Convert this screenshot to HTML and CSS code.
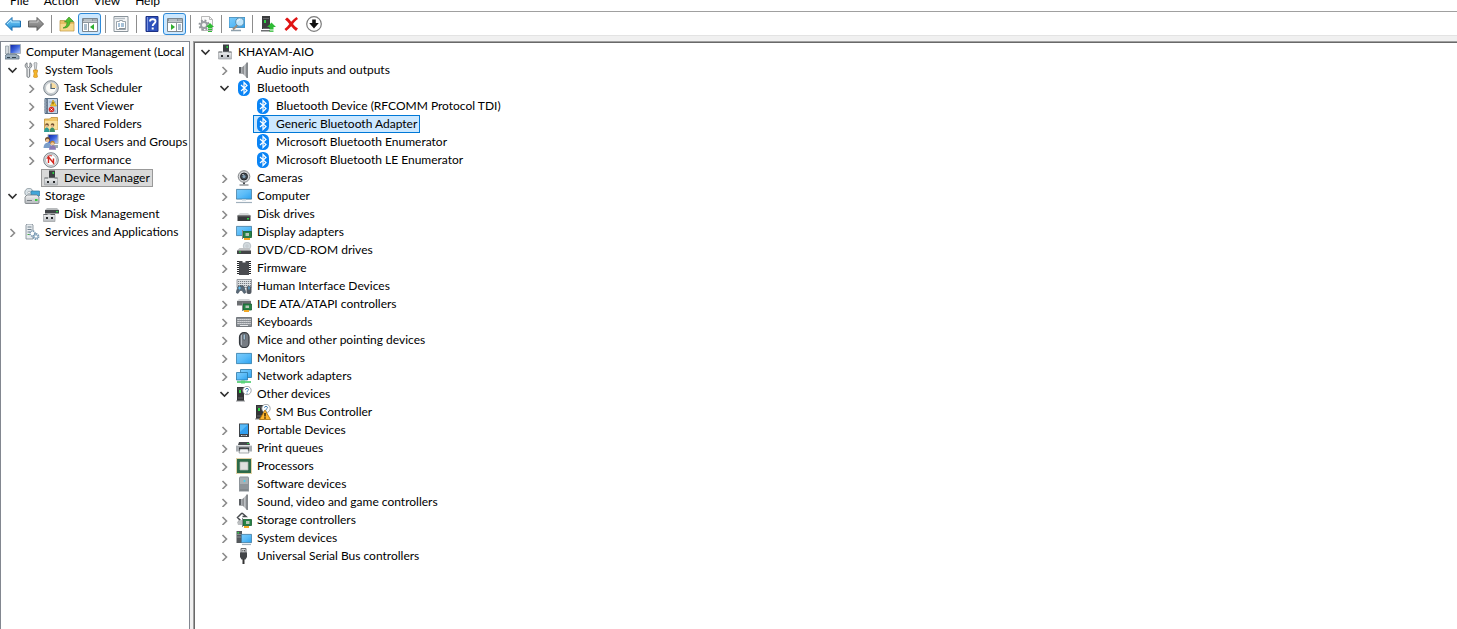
FILE: index.html
```
<!DOCTYPE html>
<html lang="en">
<head>
  <meta charset="UTF-8">
  <title>Computer Management</title>
  <meta name="viewport" content="width=device-width, initial-scale=1.0">
  <link rel="stylesheet" href="styles.css">
</head>
<body>

<!-- icon sprite -->
<svg class="sprite" aria-hidden="true">
  <defs>
    <linearGradient id="screen" x1="0" y1="0" x2="1" y2="1"><stop offset="0" stop-color="#7ccbfb"/><stop offset=".5" stop-color="#5bbcf8"/><stop offset="1" stop-color="#2ba1f0"/></linearGradient>
    <linearGradient id="metal" x1="0" y1="0" x2="1" y2="0"><stop offset="0" stop-color="#5c5f63"/><stop offset=".5" stop-color="#c9cccf"/><stop offset="1" stop-color="#74777b"/></linearGradient>
    <linearGradient id="box" x1="0" y1="0" x2="0" y2="1"><stop offset="0" stop-color="#f1f2f3"/><stop offset="1" stop-color="#b5b9bd"/></linearGradient>
    <linearGradient id="blue" x1="0" y1="0" x2="0" y2="1"><stop offset="0" stop-color="#8ad6fa"/><stop offset="1" stop-color="#1688d4"/></linearGradient>
    <linearGradient id="gray" x1="0" y1="0" x2="0" y2="1"><stop offset="0" stop-color="#b0b0b0"/><stop offset="1" stop-color="#6e6e6e"/></linearGradient>
    <linearGradient id="navy" x1="0" y1="0" x2="1" y2="1"><stop offset="0" stop-color="#0a1f9c"/><stop offset=".5" stop-color="#3c63dd"/><stop offset="1" stop-color="#b9d0fa"/></linearGradient>
  </defs>

  <symbol id="i-open" viewBox="0 0 10 10"><path d="M.5 3l4 4 4-4" fill="none" stroke="#303030" stroke-width="1.600"/></symbol>
  <symbol id="i-closed" viewBox="0 0 10 10"><path d="M2.500 2l4 4-4 4" fill="none" stroke="#8c8c8c" stroke-width="1.600"/></symbol>

  <!-- toolbar -->
  <symbol id="i-back" viewBox="0 0 16 16"><path d="M.5 8L7 1.500V5h8.500v6H7v3.500z" fill="url(#blue)" stroke="#1c6fae"/><path d="M2 8l4-4v2h8.500" fill="none" stroke="#b5e7ff"/></symbol>
  <symbol id="i-forward" viewBox="0 0 16 16"><path d="M15.500 8L9 1.500V5H.5v6H9v3.500z" fill="url(#gray)" stroke="#5f5f5f"/><path d="M1.500 6H10V4" fill="none" stroke="#c9c9c9"/></symbol>
  <symbol id="i-up" viewBox="0 0 16 16"><path d="M1 4.500h5l1.500 1.500H15v9H1z" fill="#e6bf66" stroke="#b9913c" stroke-width=".7"/><path d="M1.500 8h13v6.500h-13z" fill="#f5d98e"/><path d="M4 12c3-1 4-3 4-6H5.500l4.500-5 4.500 4.500H11c0 4-2.500 7-7 6.500z" fill="#54bd30" stroke="#2f8a17" stroke-width=".6"/></symbol>
  <symbol id="i-pane-left" viewBox="0 0 16 16"><path d="M.5 2.500h15v13H.5z" fill="#fff" stroke="#7b858d"/><path d="M1 3h14v2.500H1z" fill="#89939b"/><path d="M2 4h8" stroke="#fff" stroke-width=".8"/><path d="M11.500 4h1m1 0h1" stroke="#fff"/><path d="M1 6.500h14M6.500 7v8" stroke="#8f989f"/><path d="M2 9h3M2 11h3M2 13h3" stroke="#557a9b"/><path d="M12 8v6l-4-3z" fill="#2fae2f"/></symbol>
  <symbol id="i-props" viewBox="0 0 16 16"><path d="M1 .5h14v15H1z" fill="#f5f6f7" stroke="#8b949b"/><path d="M2 2.500h10" stroke="#b6bec4" stroke-width="1.500"/><path d="M3.500 5.500h3v-1h3v1h3v8h-9z" fill="#fff" stroke="#9ba4ab"/><path d="M5 8h2m1 0h3M5 10h2m1 0h3" stroke="#4e83b0"/><path d="M6 12.500h6" stroke="#8a9197"/></symbol>
  <symbol id="i-help" viewBox="0 0 16 16"><path d="M2 .5h12v15H2z" fill="#2f52bd" stroke="#1c3184"/><path d="M3.500 1v14" stroke="#7892df"/><path d="M6 5.500C6 2.500 11.500 2.500 11.500 5.500c0 2-2.800 2-2.800 4.500" fill="none" stroke="#fff" stroke-width="1.800"/><path d="M7.700 11.500h2v2h-2z" fill="#fff"/></symbol>
  <symbol id="i-pane-right" viewBox="0 0 16 16"><path d="M.5 2.500h15v13H.5z" fill="#fff" stroke="#7b858d"/><path d="M1 3h14v2.500H1z" fill="#89939b"/><path d="M2 4h8" stroke="#fff" stroke-width=".8"/><path d="M11.500 4h1m1 0h1" stroke="#fff"/><path d="M1 6.500h14M9.500 7v8" stroke="#8f989f"/><path d="M11 9h3m-3 2h3m-3 2h3" stroke="#557a9b"/><path d="M4 8v6l4-3z" fill="#2fae2f"/></symbol>
  <symbol id="i-gear-up" viewBox="0 0 16 16"><path d="M3.500.5h8l3 3v11h-11z" fill="#fafafa" stroke="#b9b9b9"/><path d="M11.500.5v3h3" fill="none" stroke="#b9b9b9"/><circle cx="6" cy="9" r="4.500" fill="none" stroke="#8f9498" stroke-width="2" stroke-dasharray="1.800 1.730"/><circle cx="6" cy="9" r="3" fill="#f4f4f4" stroke="#999ea2" stroke-width="1.800"/><path d="M12 7l4 4h-2v1.500h-4V11H8z" fill="#2fbb35"/><path d="M10 13.500h4M10 15.500h4" stroke="#2fbb35"/></symbol>
  <symbol id="i-scan" viewBox="0 0 16 16"><path d="M0 1.500h16v10H0z" fill="url(#screen)" stroke="#3c86b5" stroke-width=".8"/><path d="M2 14.500h10" stroke="#8fa0ac" stroke-width="1.500"/><path d="M8.500 9L4 13.500" stroke="#9a8c7e" stroke-width="2"/><circle cx="10.800" cy="6" r="4.200" fill="#bfe5fb" stroke="#5c90b0"/><path d="M8.500 5.500c.5-1.500 1.500-2 2.500-2" fill="none" stroke="#fff"/></symbol>
  <symbol id="i-update" viewBox="0 0 16 16"><path d="M2 0h8v13H2z" fill="#3b3c3e"/><path d="M3 2.500h6M3 12.500h6" stroke="#68696c"/><path d="M4 4h2v3H4z" fill="#30cf44"/><path d="M1 14h9v1.500H1z" fill="#6d6f72"/><path d="M11.500 6.500l4.500 4.500h-2.500v2h-4v-2H7z" fill="#2fbb35"/><path d="M9.500 14h4M9.500 15.700h4" stroke="#2fbb35"/></symbol>
  <symbol id="i-remove" viewBox="0 0 16 16"><path d="M2 3.500L4 1.500c1.500 1 3 2.600 4.200 4.200C9.800 4 11.500 2.400 13.500 1l1.500 2c-2 1.300-3.600 3-5 4.900 1.300 1.600 3 3.300 5 4.600L13 15c-1.800-1.300-3.400-2.900-4.800-4.700C6.600 12 5 13.700 3.200 15L1.500 13c1.800-1.500 3.400-3.300 4.800-5.100C5 6.200 3.600 4.800 2 3.500z" fill="#e01414"/></symbol>
  <symbol id="i-disable" viewBox="0 0 16 16"><circle cx="8" cy="8" r="7.300" fill="#fff" stroke="#7b7b7b" stroke-width="1.200"/><path d="M6.200 3.500h3.600V7h3L8 12.500 3.200 7h3z" fill="#111"/></symbol>

  <!-- console tree -->
  <symbol id="i-console" viewBox="0 0 16 16"><path d="M5 .5h10.500v9H5z" fill="url(#navy)" stroke="#a9b2bb"/><path d="M8 10h4v2H8z" fill="#8d969e"/><path d="M.5 2h3v8h-3z" fill="#d5dade" stroke="#8b959d" stroke-width=".7"/><path d="M0 12l2-2h8l4 2v3H0z" fill="#9db0bf" stroke="#5c6d7b" stroke-width=".8"/><path d="M2 13.500h3m2 0h4" stroke="#31424f"/></symbol>
  <symbol id="i-tools" viewBox="0 0 16 16"><path d="M3 .8v3.700l1.500 1 1.500-1V.8c2.300 1 2.500 4-.3 5.700v7.700c0 1.600-2.700 1.600-2.700 0V6.500C.5 5 .7 2 3 .8z" fill="#e7e9ea" stroke="#70767b"/><path d="M10 1l1.500-.8L13 1l-.8 6.500h-1.400z" fill="#d7dadd" stroke="#8d9194" stroke-width=".7"/><path d="M9.500 8h4v2l-.7 1 .7 4c-1 1-3 1-4 0l.7-4-.7-1z" fill="#f4b62b" stroke="#c4821a" stroke-width=".6"/></symbol>
  <symbol id="i-clock" viewBox="0 0 16 16"><circle cx="8" cy="8" r="7.300" fill="#cdd2d6" stroke="#7c858c"/><circle cx="8" cy="8" r="5.500" fill="#fbfbf8" stroke="#b4bac0" stroke-width=".6"/><path d="M8 8V2.500A5.500 5.500 0 0 1 13.500 8z" fill="#f7dda2"/><path d="M8 3.500V8.500h4" fill="none" stroke="#4f6272" stroke-width="1.200"/></symbol>
  <symbol id="i-event" viewBox="0 0 16 16"><path d="M2 .5h12.500v15H2z" fill="#c6d6e7" stroke="#596f86"/><path d="M4 1v14" stroke="#4a5d73" stroke-width="1.500"/><path d="M1 3h3M1 6h3M1 9h3M1 12h3" stroke="#8c9baa"/><path d="M6 4h7M6 13h7" stroke="#8eabc9"/><path d="M10 2l3.500 6h-6z" fill="#ffd232" stroke="#b78a12" stroke-width=".6"/><path d="M10 4v2.500" stroke="#5a4300"/><circle cx="8.500" cy="11.500" r="2.800" fill="#dd2c22"/><path d="M7.500 10.500l2 2m0-2l-2 2" stroke="#fff" stroke-width=".8"/></symbol>
  <symbol id="i-shared" viewBox="0 0 16 16"><path d="M1.500 3h5L8 1.500h6.500v12h-13z" fill="#f0c666" stroke="#bd9038" stroke-width=".8"/><path d="M2 5h12.500v8.500H2z" fill="#fae09a"/><circle cx="4" cy="9" r="1.800" fill="#6b4a2c"/><circle cx="9.500" cy="9" r="1.800" fill="#6b4a2c"/><circle cx="3.700" cy="10" r="1.300" fill="#e8b98c"/><circle cx="9.200" cy="10" r="1.300" fill="#e8b98c"/><path d="M1 16c0-6 5.500-6 5.500 0z" fill="#2d9b95"/><path d="M6.500 16c0-6 5.500-6 5.500 0z" fill="#3c8f68"/></symbol>
  <symbol id="i-users" viewBox="0 0 16 16"><path d="M5 .5h10v9H5z" fill="url(#navy)" stroke="#a9b2bb"/><path d="M9 11h6v3H9z" fill="#9aa6b0"/><circle cx="4.500" cy="5.500" r="2.500" fill="#74502d"/><circle cx="4.500" cy="6.500" r="1.800" fill="#edbd8e"/><path d="M.5 14c0-7 8-7 8 0z" fill="#7b9ec9"/><circle cx="9.500" cy="9" r="2.300" fill="#b98134"/><circle cx="9.500" cy="9.800" r="1.600" fill="#f2c99a"/><path d="M6 15.800c0-6 7-6 7 0z" fill="#8a79b5"/></symbol>
  <symbol id="i-perf" viewBox="0 0 16 16"><circle cx="8" cy="8" r="7.300" fill="#e1e4e6" stroke="#777f86"/><circle cx="8" cy="8" r="5.500" fill="#fff" stroke="#9ba2a8" stroke-width=".7"/><path d="M5.500 11V5l5 6V6.500" fill="none" stroke="#d3261e" stroke-width="1.400"/><path d="M4 7c.5-3 3-4 5-3" fill="none" stroke="#d3261e"/></symbol>
  <symbol id="i-device" viewBox="0 0 16 16"><path d="M6 .5h6v9H6z" fill="#3c3f42"/><path d="M9.500 2H11v2H9.500z" fill="#2bd142"/><path d="M1.500 8h13v7h-13z" fill="url(#box)" stroke="#a2a5a8" stroke-width=".7"/><path d="M1.500 8h3.500M11.500 8h3" stroke="#6d7073"/><path d="M4 11h2v2H4zm6 0h2v2h-2z" fill="#26282a"/></symbol>
  <symbol id="i-storage" viewBox="0 0 16 16"><circle cx="5" cy="4.500" r="4.200" fill="#d9e2e7" stroke="#87939b" stroke-width=".8"/><circle cx="5" cy="4.500" r="1.200" fill="#fff" stroke="#8b989f" stroke-width=".6"/><path d="M7 3h8.500v5H7z" fill="#42a6d9" stroke="#32799f" stroke-width=".7"/><path d="M1 9l2-2h10l2 2v5.500q0 1-1 1H2q-1 0-1-1z" fill="url(#box)" stroke="#72797e" stroke-width=".8"/><path d="M3 12.500h5" stroke="#777e83"/><path d="M11 11h2.500v2H11z" fill="#3cc940"/></symbol>
  <symbol id="i-disk" viewBox="0 0 16 16"><path d="M2 4l2-2h10l2 2v1H2z" fill="#b8bbbd"/><path d="M2 4h14v3.500H2z" fill="#424548"/><path d="M13 5h2v1.200h-2z" fill="#30d247"/><path d="M.5 8.500h11.500v7H.5z" fill="url(#box)" stroke="#9da1a4" stroke-width=".7"/><path d="M.5 8.500h4m3 0h4.500" stroke="#606366"/><path d="M3 11h2v2H3zm5 0h2v2H8z" fill="#26282a"/></symbol>
  <symbol id="i-services" viewBox="0 0 16 16"><path d="M2 1l1-1h5l1 1v14H2z" fill="#e8ecef" stroke="#87929b" stroke-width=".9"/><path d="M3.500 3h4m-4 2.500h4m-4 2.500h4" stroke="#71818e"/><path d="M3.500 10.500h3" stroke="#4fae48"/><circle cx="8.500" cy="9.500" r="2.500" fill="#fff" stroke="#7d9bb4" stroke-width="1.600" stroke-dasharray="1.300 .7"/><circle cx="12" cy="12.500" r="2.600" fill="#fff" stroke="#6f91ac" stroke-width="1.700" stroke-dasharray="1.300 .7"/><circle cx="12" cy="12.500" r="1.700" fill="none" stroke="#8ba9c1"/></symbol>

  <!-- device classes -->
  <symbol id="i-speaker" viewBox="0 0 16 16"><path d="M3 5h3v6.500H3z" fill="#5b5f63"/><path d="M5 5h1.500v6.500H5z" fill="#a9adb1"/><path d="M6.500 5L11 .5v15.500L6.500 11.500z" fill="url(#metal)"/><path d="M10.500 .5h1.500v15.500h-1.500z" fill="#84888c"/></symbol>
  <symbol id="i-bt" viewBox="0 0 16 16"><rect x="2" y="0" width="12" height="16" rx="5.500" fill="#0a84f5"/><path d="M5 5l6 5.500L8 13.500v-11l3 3L5 11" fill="none" stroke="#fff" stroke-width="1.200"/></symbol>
  <symbol id="i-camera" viewBox="0 0 16 16"><path d="M7 12h2v2.500H7z" fill="#4b4e51"/><path d="M3.500 15h9" stroke="#9c9fa2" stroke-width="1.600"/><circle cx="8" cy="6.500" r="5.800" fill="#d4d6d8" stroke="#84878a"/><circle cx="8" cy="6.500" r="3.500" fill="#424a52" stroke="#22262a"/><circle cx="8" cy="6.500" r="1.500" fill="#82a2b8"/><path d="M6.500 5l1-1" stroke="#fff"/></symbol>
  <symbol id="i-monitor" viewBox="0 0 16 16"><path d="M.4 1.400h15.200v9.700H.4z" fill="url(#screen)" stroke="#41799d" stroke-width=".8"/><path d="M6 11.500h4v1.500H6z" fill="#dce5eb"/><path d="M0 14.500h16" stroke="#a0b0bc" stroke-width="1.200"/></symbol>
  <symbol id="i-screen" viewBox="0 0 16 16"><path d="M.4 3.400h15.200v10.200H.4z" fill="url(#screen)" stroke="#2c79a7" stroke-width=".8"/></symbol>
  <symbol id="i-display" viewBox="0 0 16 16"><path d="M.4 2.400h15.200v9.200H.4z" fill="url(#screen)" stroke="#41799d" stroke-width=".8"/><path d="M7 7.500h8.500v6H7z" fill="#278345" stroke="#176030" stroke-width=".8"/><path d="M9.500 9H13v3H9.500z" fill="#b4c6b7"/><path d="M6.500 6v9" stroke="#858a8d"/><path d="M8 14h6v2H8z" fill="#f2a928"/></symbol>
  <symbol id="i-drive" viewBox="0 0 16 16"><path d="M1.500 9.500L4 7h8l2.500 2.500z" fill="#d7d9da"/><path d="M1.500 9.500h13V15h-13z" fill="#38393b"/><path d="M1.500 10h13" stroke="#6a6c6e"/><path d="M11 12h2v1.500h-2z" fill="#2fd844"/></symbol>
  <symbol id="i-dvd" viewBox="0 0 16 16"><circle cx="11" cy="4" r="3.800" fill="#d3dade" stroke="#a4afb6" stroke-width=".6"/><circle cx="11" cy="4" r="1" fill="#fff" stroke="#9da8af" stroke-width=".6"/><path d="M1 8.500L3.500 6H13l2 2.500z" fill="#c0c2c4"/><path d="M1 8.500h14V12H1z" fill="#434547"/><path d="M3 10h2" stroke="#35d846"/></symbol>
  <symbol id="i-chip" viewBox="0 0 16 16"><path d="M3 1h10v14H3z" fill="#4a4c50"/><path d="M6.500 1h3v1.500h-3z" fill="#fff"/><path d="M2 1v14M14 1v14" stroke="#222427" stroke-width="2" stroke-dasharray="1 1"/></symbol>
  <symbol id="i-hid" viewBox="0 0 16 16"><path d="M1 1.500h14.500v8H1z" fill="#dfe2e4" stroke="#858a8f" stroke-width=".8"/><path d="M2 3.500h13M2 5.500h13M2 7.500h13" stroke="#777c82" stroke-dasharray="1.200 .8"/><path d="M2 8.500q3-2 6 0l2 6-2 1-2-3H4l-2 3-2-1z" fill="#586a79" stroke="#3a4650" stroke-width=".5"/><path d="M2 10h3M3.500 8.500v3" stroke="#63c0ef"/><rect x="10.500" y="8" width="5" height="8" rx="2" fill="#525961"/><path d="M13 8.500v3" stroke="#5abef5"/></symbol>
  <symbol id="i-ide" viewBox="0 0 16 16"><path d="M1 5l2-2h10l2 2z" fill="#d2d4d6"/><path d="M1 5h14v4.500H1z" fill="#6c6f72"/><path d="M7 8h8.500v6H7z" fill="#278345" stroke="#176030" stroke-width=".8"/><path d="M9.500 9.500H13v2.500H9.500z" fill="#b4c6b7"/><path d="M6.500 6.500V15" stroke="#858a8d"/><path d="M8 14h5v2H8z" fill="#f2a928"/></symbol>
  <symbol id="i-keyboard" viewBox="0 0 16 16"><path d="M.5 3.500h15v9H.5z" fill="#8b9096" stroke="#74797e"/><path d="M1.500 5.500h13M1.500 7.500h13M1.500 9.500h13" stroke="#f4f5f6" stroke-dasharray="1.200 .8"/><path d="M4 11.500h8" stroke="#e4e7ea"/></symbol>
  <symbol id="i-mouse" viewBox="0 0 16 16"><rect x="3.500" y=".6" width="9.500" height="15" rx="4.500" fill="#767c83" stroke="#33383d" stroke-width="1.200"/><path d="M5.500 3v10" stroke="#b2b8bf"/><rect x="7.200" y="2" width="2" height="6" rx="1" fill="#b8dcf5" stroke="#343a40" stroke-width=".6"/></symbol>
  <symbol id="i-network" viewBox="0 0 16 16"><path d="M4.500 1.500h11v8h-11z" fill="url(#screen)" stroke="#2c79a7" stroke-width=".8"/><path d="M.5 4.500h11V12H.5z" fill="url(#screen)" stroke="#2c79a7" stroke-width=".8"/><path d="M1 14h14" stroke="#38c65e" stroke-width="1.500"/><path d="M5 12.500h4v3H5z" fill="#59d47b"/></symbol>
  <symbol id="i-other" viewBox="0 0 16 16"><path d="M1 1h7v14H1z" fill="#343537"/><path d="M2 3h5M2 12h5" stroke="#606264"/><path d="M3 4h2v3H3z" fill="#2fd844"/><path d="M0 15h9" stroke="#898c8f"/><circle cx="11" cy="4.500" r="4.200" fill="#fff" stroke="#8d9295" stroke-width=".8"/><path d="M9.500 3.700c0-1.800 3-1.800 3 0 0 1-1.500 1-1.500 2.300M11 6.700v1" fill="none" stroke="#3d7bb3"/></symbol>
  <symbol id="i-warn" viewBox="0 0 16 16"><use href="#i-other"/><path d="M10 6l5.500 9.500h-11z" fill="#ffb52c" stroke="#a76d09" stroke-width=".8"/><path d="M10 9v3.500m0 .8v1.400" stroke="#1a1200" stroke-width="1.300"/></symbol>
  <symbol id="i-portable" viewBox="0 0 16 16"><path d="M3 1.500h10v13.500H3z" fill="#3e4349"/><path d="M4 2.500h8v9.500H4z" fill="#319ff0"/><path d="M4 2.500h8L4 10z" fill="#58baf8"/><path d="M5 13.500h1.500m1 0h1m1 0H11" stroke="#d8dde1"/></symbol>
  <symbol id="i-printer" viewBox="0 0 16 16"><path d="M3 2h10l1 3H2z" fill="#474a4e"/><path d="M0 5h16v6.500H0z" fill="#a9aeb2"/><path d="M0 5.500h16" stroke="#dfe2e4"/><path d="M3 7.500h10V11H3z" fill="#303337"/><path d="M4 9h8l1 4H3z" fill="#f3f5f6" stroke="#6f757a" stroke-width=".6"/><path d="M11 3.500h2" stroke="#2cc345"/></symbol>
  <symbol id="i-cpu" viewBox="0 0 16 16"><path d="M.5.5h15v15H.5z" fill="none" stroke="#c4a64c" stroke-dasharray="1 1"/><path d="M1 1h14v14H1z" fill="#2c6a48"/><path d="M4 4h8v8H4z" fill="#dfe1df" stroke="#adb4af" stroke-width=".7"/></symbol>
  <symbol id="i-software" viewBox="0 0 16 16"><path d="M3 1.500l1-1h8l1 1v14H3z" fill="#8d9499"/><path d="M4 1.500h8V8H4z" fill="#a9afb3"/><path d="M4 14h8" stroke="#747a7f"/><circle cx="8.500" cy="5" r="1" fill="#3fd3f5"/></symbol>
  <symbol id="i-storctl" viewBox="0 0 16 16"><path d="M6 1L1.500 5.500 6 10M6 1l4 3.500H6.500M2 9.500h4" fill="none" stroke="#494c50" stroke-width="1.500"/><path d="M1 10l3-2h4v5H2z" fill="#bbbec0"/><path d="M7 7.500h8.500v6H7z" fill="#278345" stroke="#176030" stroke-width=".8"/><path d="M10 9h3.500v3H10z" fill="#b4c6b7"/><path d="M6.500 6v9" stroke="#858a8d"/><path d="M8 14h5v2H8z" fill="#f2a928"/></symbol>
  <symbol id="i-system" viewBox="0 0 16 16"><path d="M.5 1h5.500v12H.5z" fill="#54585c"/><path d="M1 4.500h4.500M1 7h4.500" stroke="#878c90"/><path d="M1.500 2h1.500v1.500H1.500z" fill="#34db48"/><path d="M5.400 4.400h10.200v8.200H5.400z" fill="url(#screen)" stroke="#41799d" stroke-width=".8"/><path d="M6 14.500h9" stroke="#a0b0bc" stroke-width="1.200"/></symbol>
  <symbol id="i-usb" viewBox="0 0 16 16"><path d="M5 .5h5V5H5z" fill="#d8dadc" stroke="#686b6e"/><path d="M6.500 2h.8v1.500h-.8zM8 2h.8v1.500H8z" fill="#333"/><path d="M4 4.500h7V9l-1.500 2.500h-4L4 9z" fill="#434548"/><path d="M7.500 11v5" stroke="#333" stroke-width="2"/></symbol>
</svg>

<nav class="menubar">
  <button class="menu">File</button>
  <button class="menu">Action</button>
  <button class="menu">View</button>
  <button class="menu">Help</button>
</nav>

<div class="toolbar" role="toolbar">
  <button class="tool" aria-label="Back"><svg class="icon"><use href="#i-back"/></svg></button>
  <button class="tool" aria-label="Forward"><svg class="icon"><use href="#i-forward"/></svg></button>
  <span class="sep"></span>
  <button class="tool" aria-label="Up one level"><svg class="icon"><use href="#i-up"/></svg></button>
  <button class="tool active" aria-label="Show console tree"><svg class="icon"><use href="#i-pane-left"/></svg></button>
  <span class="sep"></span>
  <button class="tool" aria-label="Properties"><svg class="icon"><use href="#i-props"/></svg></button>
  <span class="sep"></span>
  <button class="tool" aria-label="Help"><svg class="icon"><use href="#i-help"/></svg></button>
  <button class="tool active" aria-label="Show action pane"><svg class="icon"><use href="#i-pane-right"/></svg></button>
  <span class="sep"></span>
  <button class="tool" aria-label="Update driver"><svg class="icon"><use href="#i-gear-up"/></svg></button>
  <span class="sep"></span>
  <button class="tool" aria-label="Scan for hardware changes"><svg class="icon"><use href="#i-scan"/></svg></button>
  <span class="sep"></span>
  <button class="tool" aria-label="Enable device"><svg class="icon"><use href="#i-update"/></svg></button>
  <button class="tool" aria-label="Uninstall device"><svg class="icon"><use href="#i-remove"/></svg></button>
  <button class="tool" aria-label="Disable device"><svg class="icon"><use href="#i-disable"/></svg></button>
</div>

<main class="panes">
  <section class="pane console">
    <ul class="tree">
      <li class="row"><span class="item"><svg class="icon"><use href="#i-console"/></svg>Computer Management (Local</span></li>
      <li>
        <div class="row"><button class="expander" aria-label="Collapse"><svg><use href="#i-open"/></svg></button><span class="item"><svg class="icon"><use href="#i-tools"/></svg>System Tools</span></div>
        <ul>
          <li class="row"><button class="expander" aria-label="Expand"><svg><use href="#i-closed"/></svg></button><span class="item"><svg class="icon"><use href="#i-clock"/></svg>Task Scheduler</span></li>
          <li class="row"><button class="expander" aria-label="Expand"><svg><use href="#i-closed"/></svg></button><span class="item"><svg class="icon"><use href="#i-event"/></svg>Event Viewer</span></li>
          <li class="row"><button class="expander" aria-label="Expand"><svg><use href="#i-closed"/></svg></button><span class="item"><svg class="icon"><use href="#i-shared"/></svg>Shared Folders</span></li>
          <li class="row"><button class="expander" aria-label="Expand"><svg><use href="#i-closed"/></svg></button><span class="item"><svg class="icon"><use href="#i-users"/></svg>Local Users and Groups</span></li>
          <li class="row"><button class="expander" aria-label="Expand"><svg><use href="#i-closed"/></svg></button><span class="item"><svg class="icon"><use href="#i-perf"/></svg>Performance</span></li>
          <li class="row leaf"><span class="item current"><svg class="icon"><use href="#i-device"/></svg>Device Manager</span></li>
        </ul>
      </li>
      <li>
        <div class="row"><button class="expander" aria-label="Collapse"><svg><use href="#i-open"/></svg></button><span class="item"><svg class="icon"><use href="#i-storage"/></svg>Storage</span></div>
        <ul>
          <li class="row leaf"><span class="item"><svg class="icon"><use href="#i-disk"/></svg>Disk Management</span></li>
        </ul>
      </li>
      <li class="row"><button class="expander" aria-label="Expand"><svg><use href="#i-closed"/></svg></button><span class="item"><svg class="icon"><use href="#i-services"/></svg>Services and Applications</span></li>
    </ul>
  </section>

  <section class="pane devices">
    <ul class="tree">
      <li>
        <div class="row"><button class="expander" aria-label="Collapse"><svg><use href="#i-open"/></svg></button><span class="item"><svg class="icon"><use href="#i-device"/></svg>KHAYAM-AIO</span></div>
        <ul>
          <li class="row"><button class="expander" aria-label="Expand"><svg><use href="#i-closed"/></svg></button><span class="item"><svg class="icon"><use href="#i-speaker"/></svg>Audio inputs and outputs</span></li>
          <li>
            <div class="row"><button class="expander" aria-label="Collapse"><svg><use href="#i-open"/></svg></button><span class="item"><svg class="icon"><use href="#i-bt"/></svg>Bluetooth</span></div>
            <ul>
              <li class="row leaf"><span class="item"><svg class="icon"><use href="#i-bt"/></svg>Bluetooth Device (RFCOMM Protocol TDI)</span></li>
              <li class="row leaf"><span class="item selected"><svg class="icon"><use href="#i-bt"/></svg>Generic Bluetooth Adapter</span></li>
              <li class="row leaf"><span class="item"><svg class="icon"><use href="#i-bt"/></svg>Microsoft Bluetooth Enumerator</span></li>
              <li class="row leaf"><span class="item"><svg class="icon"><use href="#i-bt"/></svg>Microsoft Bluetooth LE Enumerator</span></li>
            </ul>
          </li>
          <li class="row"><button class="expander" aria-label="Expand"><svg><use href="#i-closed"/></svg></button><span class="item"><svg class="icon"><use href="#i-camera"/></svg>Cameras</span></li>
          <li class="row"><button class="expander" aria-label="Expand"><svg><use href="#i-closed"/></svg></button><span class="item"><svg class="icon"><use href="#i-monitor"/></svg>Computer</span></li>
          <li class="row"><button class="expander" aria-label="Expand"><svg><use href="#i-closed"/></svg></button><span class="item"><svg class="icon"><use href="#i-drive"/></svg>Disk drives</span></li>
          <li class="row"><button class="expander" aria-label="Expand"><svg><use href="#i-closed"/></svg></button><span class="item"><svg class="icon"><use href="#i-display"/></svg>Display adapters</span></li>
          <li class="row"><button class="expander" aria-label="Expand"><svg><use href="#i-closed"/></svg></button><span class="item"><svg class="icon"><use href="#i-dvd"/></svg>DVD/CD-ROM drives</span></li>
          <li class="row"><button class="expander" aria-label="Expand"><svg><use href="#i-closed"/></svg></button><span class="item"><svg class="icon"><use href="#i-chip"/></svg>Firmware</span></li>
          <li class="row"><button class="expander" aria-label="Expand"><svg><use href="#i-closed"/></svg></button><span class="item"><svg class="icon"><use href="#i-hid"/></svg>Human Interface Devices</span></li>
          <li class="row"><button class="expander" aria-label="Expand"><svg><use href="#i-closed"/></svg></button><span class="item"><svg class="icon"><use href="#i-ide"/></svg>IDE ATA/ATAPI controllers</span></li>
          <li class="row"><button class="expander" aria-label="Expand"><svg><use href="#i-closed"/></svg></button><span class="item"><svg class="icon"><use href="#i-keyboard"/></svg>Keyboards</span></li>
          <li class="row"><button class="expander" aria-label="Expand"><svg><use href="#i-closed"/></svg></button><span class="item"><svg class="icon"><use href="#i-mouse"/></svg>Mice and other pointing devices</span></li>
          <li class="row"><button class="expander" aria-label="Expand"><svg><use href="#i-closed"/></svg></button><span class="item"><svg class="icon"><use href="#i-screen"/></svg>Monitors</span></li>
          <li class="row"><button class="expander" aria-label="Expand"><svg><use href="#i-closed"/></svg></button><span class="item"><svg class="icon"><use href="#i-network"/></svg>Network adapters</span></li>
          <li>
            <div class="row"><button class="expander" aria-label="Collapse"><svg><use href="#i-open"/></svg></button><span class="item"><svg class="icon"><use href="#i-other"/></svg>Other devices</span></div>
            <ul>
              <li class="row leaf"><span class="item"><svg class="icon"><use href="#i-warn"/></svg>SM Bus Controller</span></li>
            </ul>
          </li>
          <li class="row"><button class="expander" aria-label="Expand"><svg><use href="#i-closed"/></svg></button><span class="item"><svg class="icon"><use href="#i-portable"/></svg>Portable Devices</span></li>
          <li class="row"><button class="expander" aria-label="Expand"><svg><use href="#i-closed"/></svg></button><span class="item"><svg class="icon"><use href="#i-printer"/></svg>Print queues</span></li>
          <li class="row"><button class="expander" aria-label="Expand"><svg><use href="#i-closed"/></svg></button><span class="item"><svg class="icon"><use href="#i-cpu"/></svg>Processors</span></li>
          <li class="row"><button class="expander" aria-label="Expand"><svg><use href="#i-closed"/></svg></button><span class="item"><svg class="icon"><use href="#i-software"/></svg>Software devices</span></li>
          <li class="row"><button class="expander" aria-label="Expand"><svg><use href="#i-closed"/></svg></button><span class="item"><svg class="icon"><use href="#i-speaker"/></svg>Sound, video and game controllers</span></li>
          <li class="row"><button class="expander" aria-label="Expand"><svg><use href="#i-closed"/></svg></button><span class="item"><svg class="icon"><use href="#i-storctl"/></svg>Storage controllers</span></li>
          <li class="row"><button class="expander" aria-label="Expand"><svg><use href="#i-closed"/></svg></button><span class="item"><svg class="icon"><use href="#i-system"/></svg>System devices</span></li>
          <li class="row"><button class="expander" aria-label="Expand"><svg><use href="#i-closed"/></svg></button><span class="item"><svg class="icon"><use href="#i-usb"/></svg>Universal Serial Bus controllers</span></li>
        </ul>
      </li>
    </ul>
  </section>
</main>

</body>
</html>
```
FILE: styles.css
```
* { box-sizing: border-box; }
body {
  margin: 0;
  background: #f0f0f0;
  color: #000;
  font-family: Lato, "Open Sans", sans-serif;
  font-size: 12px;
  line-height: 16px;
  display: flex;
  flex-direction: column;
  height: 100vh;
  overflow: hidden;
}
button {
  font: inherit;
  color: inherit;
  background: none;
  border: none;
  padding: 0;
}
.sprite {
  position: absolute;
  width: 0;
  height: 0;
}
.icon {
  width: 16px;
  height: 16px;
  flex: none;
}

/* menu and toolbar */
.menubar {
  display: flex;
  align-items: flex-end;
  gap: 15px;
  flex: none;
  height: 11px;
  padding: 0 10px 2px;
  background: #fff;
  overflow: hidden;
}
.toolbar {
  display: flex;
  flex: none;
  height: 25px;
  padding: 1px;
  background: #fff;
  border-top: 1px solid #a0a0a0;
  border-bottom: 1px solid #e3e3e3;
}
.tool {
  display: flex;
  align-items: center;
  justify-content: center;
  width: 23px;
  height: 22px;
  border: 1px solid transparent;
  border-radius: 3px;
}
.tool.active {
  background: #cce8ff;
  border-color: #2f8ad8;
}
.sep {
  width: 8px;
  height: 18px;
  margin-top: 2px;
  background: linear-gradient(#8d8d8d, #8d8d8d) center / 1px 100% no-repeat;
}

/* panes */
.panes {
  display: flex;
  flex: 1;
  gap: 3px;
  min-height: 0;
  padding-top: 5px;
}
.pane {
  background: #fff;
  overflow: hidden;
}
.console {
  flex: 0 0 190px;
  padding: 1px 0 0 2px;
  border: 1px solid #828790;
  border-bottom: none;
}
.devices {
  flex: 1;
  padding: 1px 0 0 2px;
  border-top: 1px solid #a0a0a0;
  border-left: 1px solid #a0a0a0;
  box-shadow: inset 1px 1px #696969;
}

/* tree */
.tree, .tree ul {
  list-style: none;
  margin: 0;
  padding: 0;
}
.tree ul {
  padding-left: 19px;
}
.row {
  display: flex;
  height: 18px;
  white-space: nowrap;
}
.leaf {
  padding-left: 19px;
}
.expander {
  display: flex;
  align-items: center;
  justify-content: center;
  flex: none;
  width: 19px;
  height: 18px;
}
.expander svg {
  width: 10px;
  height: 10px;
}
.item {
  display: flex;
  align-items: center;
  gap: 5px;
  padding: 0 2px 0 1px;
  border: 1px solid transparent;
}
.item.current {
  background: #d9d9d9;
  border-color: #999;
}
.item.selected {
  background: #cce8ff;
  border-color: #0078d7;
}
```
